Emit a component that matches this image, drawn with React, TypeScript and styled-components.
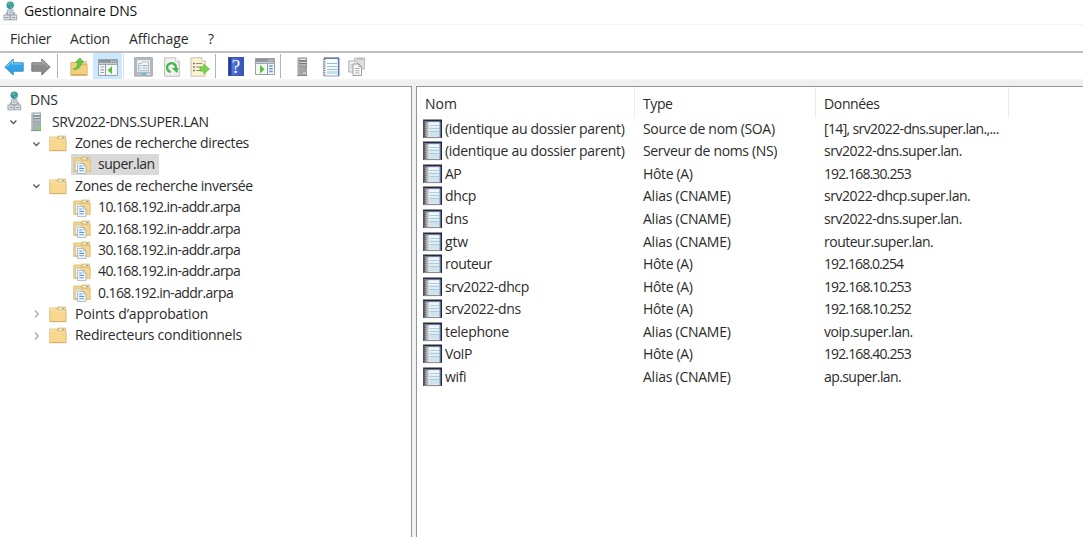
import React from 'react';
import styled, { createGlobalStyle } from 'styled-components';

const GlobalStyle = createGlobalStyle`
  * { box-sizing: border-box; }
  body { margin: 0; background: #fff; overflow: hidden; }
`;

const Window = styled.div`
  width: 1083px;
  height: 537px;
  display: flex;
  flex-direction: column;
  overflow: hidden;
  background: #fff;
  color: #2b2b2b;
  font-family: 'Open Sans', 'Noto Sans', sans-serif;
  font-size: 14px;
  line-height: 20px;
  white-space: nowrap;
`;

const Label = styled.span<{ $spacing?: number }>`
  letter-spacing: ${(p) => p.$spacing ?? -0.3}px;
`;

const TitleBar = styled.header`
  height: 25px;
  display: flex;
  align-items: center;
  gap: 6px;
  padding: 0 0 2px 3px;
  border-bottom: 1px solid #f3f3f3;
  color: #111;
`;

const MenuBar = styled.nav`
  height: 26px;
  display: flex;
  align-items: center;
  padding: 1px 0 0 10px;
`;

const MenuItem = styled.div<{ $width: number }>`
  width: ${(p) => p.$width}px;
`;

const Toolbar = styled.div`
  height: 29px;
  display: flex;
  align-items: flex-start;
  border-top: 2px solid #c0c0c0;
  border-bottom: 1px solid #f5f5f5;
`;

const Tool = styled.div<{ $before: number }>`
  flex: none;
  height: 27px;
  margin-left: ${(p) => p.$before}px;
  display: flex;
  align-items: center;
  justify-content: center;
`;

const ActiveTool = styled(Tool)`
  width: 29px;
  height: 26px;
  padding-top: 2px;
  background: #cce8ff;
`;

const Separator = styled.div<{ $before: number; $light?: boolean }>`
  flex: none;
  width: 1px;
  height: 24px;
  margin: 1px 0 0 ${(p) => p.$before}px;
  background: ${(p) => (p.$light ? '#dcdcdc' : '#b4b4b4')};
`;

const Workspace = styled.main`
  flex: 1;
  display: flex;
  gap: 4px;
  padding-top: 6px;
  background: #f0f0f0;
`;

const TreePane = styled.section`
  width: 412px;
  padding-top: 3.2px;
  background: #fff;
  border-top: 1px solid #8f969c;
  border-right: 1px solid #8f969c;
`;

const TreeRow = styled.div<{ $level: number }>`
  height: 21.36px;
  display: flex;
  align-items: center;
  padding-left: ${(p) => [0, 6, 29, 50][p.$level]}px;
`;

const Twisty = styled.div<{ $level: number }>`
  width: ${(p) => [6, 22, 18, 21][p.$level]}px;
  display: flex;
`;

const TreeIcon = styled.div<{ $level: number }>`
  width: ${(p) => [19, 19, 23, 22][p.$level]}px;
  padding-left: ${(p) => [1, 2, 2, 2][p.$level]}px;
  display: flex;
  justify-content: flex-start;
`;

const TreeText = styled.div`
  height: 21px;
  padding: 0 4px 0 5px;
`;

const SelectionBand = styled.div<{ $selected?: boolean }>`
  display: flex;
  align-items: center;
  background: ${(p) => (p.$selected ? '#d9d9d9' : 'transparent')};
`;

const ListPane = styled.section`
  flex: 1;
  background: #fff;
  border-top: 1px solid #8f969c;
  border-left: 1px solid #8f969c;
`;

const HeaderRow = styled.div`
  height: 30.5px;
  display: flex;
`;

const HeaderCell = styled.div<{ $width: number }>`
  width: ${(p) => p.$width}px;
  padding: 7px 0 0 8px;
  border-right: 1px solid #ececec;
`;

const RecordRow = styled.div`
  height: 22.57px;
  display: flex;
  align-items: center;
`;

const NameCell = styled.div`
  width: 218px;
  display: flex;
  align-items: center;
  gap: 2px;
  padding-left: 6px;
`;

const Cell = styled.div<{ $width: number }>`
  width: ${(p) => p.$width}px;
  padding-left: 8px;
`;

const NetworkIcon = () => (
  <svg width="15" height="20" viewBox="0 0 15 20">
    <path d="M7.5 8v5M3.5 14v-2h8v2" fill="none" stroke="#a9afb7" strokeWidth="1.4" />
    <circle cx="7.2" cy="4.2" r="3.7" fill="#3b90b5" />
    <path d="M4.6 2.2Q7 .4 9 1.8L7.6 4 5 4.4zM7 5.5l3.4-1.4-.8 2.7-2 .8z" fill="#4fbb74" />
    <rect x="4.6" y="9" width="5.4" height="4.4" fill="#e5e8ec" stroke="#a0a6af" />
    <rect x="1" y="14" width="6" height="4.8" fill="#dfe3e8" stroke="#a0a6af" />
    <rect x="7.6" y="14" width="6" height="4.8" fill="#dfe3e8" stroke="#a0a6af" />
    <path d="M6 11.2h2.6M2.5 16.5h3M9.2 16.5h3" stroke="#8a929d" />
  </svg>
);

const ServerIcon = ({ gray }: { gray?: boolean }) => (
  <svg width="12" height="20" viewBox="0 0 12 20">
    <path d="M1 1l2-.6h8V19H1z" fill={gray ? '#949494' : '#98a5ac'} />
    <path d="M1 1l1.6-.4V19H1z" fill="#c3c8cb" />
    <path d="M3.5 2h6.5v7H3.5z" fill={gray ? '#777' : '#7e8b92'} />
    <path d="M3.5 2.4H10M3.5 5.2H10M3.5 8H10" stroke="#eef1f2" strokeWidth="1.1" />
    <path d="M3 10h7.5v8H3z" fill={gray ? '#a4a4a4' : '#a5b1b7'} />
    <path d="M1 18.6h10" stroke={gray ? '#808080' : '#7f8b91'} strokeWidth=".8" />
    {gray ? <path d="M7 16h3" stroke="#e8e8e8" /> : <rect x="7" y="15" width="3" height="2.6" fill="#7be23a" />}
  </svg>
);

const FolderIcon = () => (
  <svg width="18" height="17" viewBox="0 0 18 17">
    <path d="M8.5 1h8v4H8z" fill="#eccb82" stroke="#d5b36b" strokeWidth=".7" />
    <path d="M10.5 2.6h5" stroke="#fff8dc" strokeWidth="1.4" />
    <path d="M13 2.6h2" stroke="#74b0d8" strokeWidth="1.2" />
    <path d="M.7 2h6.6l1.2 2.3h8.7V15.6H.7z" fill="#f7d88e" stroke="#dcb970" strokeWidth=".8" />
    <path d="M1.6 5V3h5l1.2 2.2h8.5" fill="none" stroke="#fbe8b2" />
    <path d="M.8 15.6h16.4" stroke="#c9a560" strokeWidth=".8" />
  </svg>
);

const ZoneIcon = () => (
  <svg width="18" height="18" viewBox="0 0 18 18">
    <path d="M8.5 1h8v4H8z" fill="#eccb82" stroke="#d5b36b" strokeWidth=".7" />
    <path d="M10.5 2.6h5" stroke="#fff8dc" strokeWidth="1.4" />
    <path d="M13 2.6h2" stroke="#74b0d8" strokeWidth="1.2" />
    <path d="M.7 2h6.6l1.2 2.3h8.7V15.6H.7z" fill="#f6d68c" stroke="#dcb970" strokeWidth=".8" />
    <path d="M2.3 5.2h5.6l1.6 2v7.3H2.3z" fill="#f3f3f1" stroke="#b5b5ac" strokeWidth=".7" />
    <path d="M4.6 7.4h5.8L13 10v7.4H4.6z" fill="#fbfdff" stroke="#98a7b5" strokeWidth=".8" />
    <path d="M6.2 10h3M6.2 12.4h5M6.2 14.8h5" stroke="#5c96ca" strokeWidth="1.1" />
    <path d="M10.4 7.4V10H13" fill="none" stroke="#98a7b5" strokeWidth=".7" />
  </svg>
);

const RecordIcon = () => (
  <svg width="20" height="20" viewBox="0 0 20 20">
    <path d="M.5 1h18.3v18H.5z" fill="#a3a5aa" />
    <path d="M4 2.3h13v15.5H4z" fill="#f1f6f9" />
    <path d="M3.5 2.8h2.2v15H3.5z" fill="#bfc0c3" />
    <path d="M6.5 8h9.5v9H6.5z" fill="#cfe3ed" />
    <path d="M6.5 6.5H16M6.5 9.5H16M6.5 12.5H16" stroke="#a9cde0" />
    <path d="M6.5 8H16M6.5 11H16" stroke="#eff7fa" />
    <path d="M0 1.3h19" stroke="#2a2b31" strokeWidth="1.6" />
    <path d="M3 2.6h15" stroke="#6575a5" />
    <path d="M.9 1v18" stroke="#3b3c42" strokeWidth="1.5" />
    <path d="M2.7 3v15.5" stroke="#6c6d72" strokeWidth="1.4" strokeDasharray="1 1" />
    <path d="M18.2 1v18" stroke="#1d2645" strokeWidth="1.6" />
    <path d="M16.9 3v15" stroke="#7f93bc" />
    <path d="M1 18.6h17" stroke="#8a8c90" />
  </svg>
);

const NotebookIcon = () => (
  <svg width="18" height="20" viewBox="0 0 18 20">
    <path d="M2 1h15v18H2z" fill="#f8fcfe" stroke="#98a3bd" />
    <path d="M2 1.2h15" stroke="#5d71ad" strokeWidth="1.4" />
    <path d="M16.5 1v18" stroke="#6376b2" strokeWidth="1.4" />
    <path d="M5 6.5h10M5 9.5h10M5 12.5h10" stroke="#8fc1dc" />
    <path d="M5 15.5h10" stroke="#c1deeb" strokeWidth="3" />
    <path d="M2.3 2v17" stroke="#8f9197" strokeWidth="2.6" strokeDasharray="1 1.2" />
  </svg>
);

const ArrowIcon = ({ forward }: { forward?: boolean }) => (
  <svg width="20" height="18" viewBox="0 0 20 18">
    <g transform={forward ? 'matrix(-1 0 0 1 20 0)' : undefined}>
      <path
        d="M.8 9L9.2 1v3.8h10v8.4h-10V17z"
        fill={forward ? '#8c8c8c' : '#34a3e6'}
        stroke={forward ? '#7d7d7d' : '#3c93c8'}
        strokeWidth="1"
        strokeLinejoin="round"
      />
      <path d="M2.6 8.6L8.4 3.3V6H18" fill="none" stroke={forward ? '#aaa' : '#83d0f8'} strokeWidth="1.2" />
    </g>
  </svg>
);

const UpFolderIcon = () => (
  <svg width="18" height="20" viewBox="0 0 18 20">
    <path d="M9 4h8v5H9z" fill="#dcb872" />
    <path d="M12 5.5h4.3" stroke="#fff3cb" strokeWidth="1.4" />
    <path d="M.8 5.5h6L8.3 7.6h8.9v10.8H.8z" fill="#f0cf7f" stroke="#d8b263" strokeWidth=".8" />
    <path d="M1.4 17.8h15.4" stroke="#caa04e" />
    <path d="M3 12.2c3.4-.8 4.9-3 5-6.7H5.4L9.8 .9l4 4.6h-2.6c-.2 4.6-2.8 7.4-8.2 6.7z" fill="#62c93f" stroke="#4bac33" strokeWidth=".7" />
  </svg>
);

const PanelIcon = ({ run }: { run?: boolean }) => (
  <svg width="20" height="17" viewBox="0 0 20 17">
    <path d="M.5.5h19v16H.5z" fill="#f5f6f7" stroke="#9aa0a6" />
    <path d="M1 1h18v4.8H1z" fill="#8d949c" />
    <path d="M1 4.4h18" stroke="#c8cdd2" strokeWidth="1.2" />
    <path d="M13 2.2h1.4M15.3 2.2h1.4M17.5 2.2h1" stroke="#e8edf1" />
    {run ? (
      <>
        <path d="M12.5 6v10" stroke="#8d949b" />
        <path d="M5 6.8l4.5 4.4L5 15.4z" fill="#58c03d" />
        <path d="M14.2 8h3.5M14.2 10.8h3.5M14.2 13.5h3.5" stroke="#5b99cb" strokeWidth="1.4" />
      </>
    ) : (
      <>
        <path d="M7.5 6v10" stroke="#8d949b" />
        <path d="M14 7l-4.3 4.2L14 15.2z" fill="#58c03d" />
        <path d="M2.5 8h3.3M2.5 10.8h3.3M2.5 13.5h3.3" stroke="#86a3b7" strokeWidth="1.2" />
      </>
    )}
  </svg>
);

const PropertiesIcon = () => (
  <svg width="19" height="20" viewBox="0 0 19 20">
    <path d="M.7.7h17.6v18.4H.7z" fill="#b9bdc0" stroke="#a1a6aa" />
    <path d="M2.6 2.8h13.8v12.4H2.6z" fill="#f3f5f6" stroke="#a2a7ab" strokeWidth=".7" />
    <path d="M4.5 6.4h3l1-1.4h6v8.5h-10z" fill="#f5f8fa" stroke="#9fabb4" strokeWidth=".8" />
    <path d="M5.5 8.6h2M8.5 8.6h5M5.5 11.2h2M8.5 11.2h5" stroke="#86b5d2" strokeWidth="1.1" />
    <path d="M8 17.2h4" stroke="#4bbce4" strokeWidth="1.8" />
    <path d="M13 17.2h3" stroke="#e4e8ea" strokeWidth="1.5" />
  </svg>
);

const RefreshIcon = () => (
  <svg width="16" height="20" viewBox="0 0 16 20">
    <path d="M.6.8h11l3.7 3.7v14.7H.6z" fill="#f1f1f1" stroke="#bdbdbd" />
    <path d="M11.6.8v3.7h3.7" fill="#fff" stroke="#c4c4c4" strokeWidth=".8" />
    <path d="M6.7 15C2.6 14 2 9 5 7c3.3-2.1 7.4.2 6.8 4.4" fill="none" stroke="#42b949" strokeWidth="2.3" />
    <path d="M7.7 11h6.8l-1.4 5z" fill="#42b949" />
  </svg>
);

const ExportIcon = () => (
  <svg width="20" height="20" viewBox="0 0 20 20">
    <path d="M1 .8h10.7l3.5 3.5v14.9H1z" fill="#fbf3d3" stroke="#c6c0ab" />
    <path d="M11.7.8v3.5h3.5" fill="#fff" stroke="#c6c0ab" strokeWidth=".8" />
    <path d="M3.2 6.5h1.5M3.2 10h1.5M3.2 13.5h1.5" stroke="#555" strokeWidth="1.4" />
    <path d="M6.2 6.5h6M6.2 10h4M6.2 13.5h4" stroke="#8f8b7d" strokeWidth="1.2" />
    <path d="M10 9.8h3.7V7l5.8 5-5.8 5v-2.9H10z" fill="#7ad04f" stroke="#62bb42" strokeWidth=".7" />
  </svg>
);

const HelpTile = styled.div`
  width: 16px;
  height: 19px;
  background: linear-gradient(90deg, #233c9e 0 2px, #5878d7 3px, #3154bd);
  border: 1px solid #3b56aa;
  color: #fff;
  font: 19px/17px 'Liberation Serif', serif;
  text-align: center;
`;

const CopyIcon = () => (
  <svg width="18" height="20" viewBox="0 0 18 20">
    <path d="M6.5 1h10v11h-10z" fill="#dedede" stroke="#bcbcbc" />
    <path d="M9 1h8v2H9z" fill="#c0c0c0" />
    <path d="M.8 4h6.7l2 2v9H.8z" fill="#f0f0f0" stroke="#ababab" />
    <path d="M2.5 7.5h3M2.5 9.5h3M2.5 11.5h3" stroke="#c4c4c4" />
    <path d="M5 7h6l2.5 2.5V18.5H5z" fill="#fafafa" stroke="#9d9d9d" />
    <path d="M7 11.5h4.5M7 13.8h4.5M7 16h4.5" stroke="#aaa" />
    <path d="M11 7v2.5h2.5" fill="none" stroke="#a5a5a5" />
  </svg>
);

const Chevron = ({ open }: { open?: boolean }) => (
  <svg width="14" height="10" viewBox="0 0 14 10">
    <path
      d={open ? 'M4.4 3.6l3 2.9 3-2.9' : 'M6 1.6l3.2 3.4L6 8.4'}
      fill="none"
      stroke={open ? '#5c5c5c' : '#acacac'}
      strokeWidth="1.4"
    />
  </svg>
);

type Node = {
  text: string;
  level: number;
  icon: React.ReactNode;
  open?: boolean;
  closed?: boolean;
  selected?: boolean;
  spacing?: number;
};

const nodes: Node[] = [
  { text: 'DNS', level: 0, icon: <NetworkIcon />, spacing: -0.2 },
  { text: 'SRV2022-DNS.SUPER.LAN', level: 1, icon: <ServerIcon />, open: true, spacing: -0.47 },
  { text: 'Zones de recherche directes', level: 2, icon: <FolderIcon />, open: true, spacing: -0.39 },
  { text: 'super.lan', level: 3, icon: <ZoneIcon />, selected: true, spacing: -0.48 },
  { text: 'Zones de recherche inversée', level: 2, icon: <FolderIcon />, open: true, spacing: -0.36 },
  { text: '10.168.192.in-addr.arpa', level: 3, icon: <ZoneIcon />, spacing: -0.59 },
  { text: '20.168.192.in-addr.arpa', level: 3, icon: <ZoneIcon />, spacing: -0.59 },
  { text: '30.168.192.in-addr.arpa', level: 3, icon: <ZoneIcon />, spacing: -0.59 },
  { text: '40.168.192.in-addr.arpa', level: 3, icon: <ZoneIcon />, spacing: -0.59 },
  { text: '0.168.192.in-addr.arpa', level: 3, icon: <ZoneIcon />, spacing: -0.58 },
  { text: 'Points d’approbation', level: 2, icon: <FolderIcon />, closed: true, spacing: -0.15 },
  { text: 'Redirecteurs conditionnels', level: 2, icon: <FolderIcon />, closed: true, spacing: -0.29 },
];

type Field = [text: string, spacing: number];

const alias: Field = ['Alias (CNAME)', -0.25];
const host: Field = ['Hôte (A)', -0.35];
const parent: Field = ['(identique au dossier parent)', -0.31];

const records: [Field, Field, Field][] = [
  [parent, ['Source de nom (SOA)', -0.33], ['[14], srv2022-dns.super.lan.,...', -0.64]],
  [parent, ['Serveur de noms (NS)', -0.34], ['srv2022-dns.super.lan.', -0.46]],
  [['AP', -0.5], host, ['192.168.30.253', -0.88]],
  [['dhcp', -0.35], alias, ['srv2022-dhcp.super.lan.', -0.45]],
  [['dns', -0.15], alias, ['srv2022-dns.super.lan.', -0.46]],
  [['gtw', -0.15], alias, ['routeur.super.lan.', -0.5]],
  [['routeur', -0.45], host, ['192.168.0.254', -0.92]],
  [['srv2022-dhcp', -0.37], host, ['192.168.10.253', -0.88]],
  [['srv2022-dns', -0.36], host, ['192.168.10.252', -0.88]],
  [['telephone', -0.28], alias, ['voip.super.lan.', -0.47]],
  [['VoIP', -0.6], host, ['192.168.40.253', -0.88]],
  [['wifi', -0.35], alias, ['ap.super.lan.', -0.58]],
];

export default function App() {
  return (
    <>
      <GlobalStyle />
      <Window>
        <TitleBar>
          <NetworkIcon />
          <Label $spacing={-0.17}>Gestionnaire DNS</Label>
        </TitleBar>
        <MenuBar>
          <MenuItem $width={60}><Label $spacing={-0.27}>Fichier</Label></MenuItem>
          <MenuItem $width={59}><Label $spacing={-0.2}>Action</Label></MenuItem>
          <MenuItem $width={79}><Label $spacing={-0.1}>Affichage</Label></MenuItem>
          <MenuItem $width={20}><Label>?</Label></MenuItem>
        </MenuBar>
        <Toolbar>
          <Tool $before={4}><ArrowIcon /></Tool>
          <Tool $before={7}><ArrowIcon forward /></Tool>
          <Separator $before={6} />
          <Tool $before={12}><UpFolderIcon /></Tool>
          <ActiveTool $before={5}><PanelIcon /></ActiveTool>
          <Separator $before={1} $light />
          <Tool $before={10}><PropertiesIcon /></Tool>
          <Tool $before={11}><RefreshIcon /></Tool>
          <Tool $before={10}><ExportIcon /></Tool>
          <Separator $before={5} />
          <Tool $before={12}><HelpTile>?</HelpTile></Tool>
          <Tool $before={11}><PanelIcon run /></Tool>
          <Separator $before={5} />
          <Tool $before={15}><ServerIcon gray /></Tool>
          <Tool $before={14}><NotebookIcon /></Tool>
          <Tool $before={8}><CopyIcon /></Tool>
        </Toolbar>
        <Workspace>
          <TreePane>
            {nodes.map((n) => (
              <TreeRow key={n.text} $level={n.level}>
                <Twisty $level={n.level}>{(n.open || n.closed) && <Chevron open={n.open} />}</Twisty>
                <SelectionBand $selected={n.selected}>
                  <TreeIcon $level={n.level}>{n.icon}</TreeIcon>
                  <TreeText><Label $spacing={n.spacing}>{n.text}</Label></TreeText>
                </SelectionBand>
              </TreeRow>
            ))}
          </TreePane>
          <ListPane>
            <HeaderRow>
              <HeaderCell $width={218}><Label $spacing={0}>Nom</Label></HeaderCell>
              <HeaderCell $width={181}><Label $spacing={-0.4}>Type</Label></HeaderCell>
              <HeaderCell $width={193}><Label $spacing={-0.35}>Données</Label></HeaderCell>
            </HeaderRow>
            {records.map(([name, type, data], i) => (
              <RecordRow key={i}>
                <NameCell><RecordIcon /><Label $spacing={name[1]}>{name[0]}</Label></NameCell>
                <Cell $width={181}><Label $spacing={type[1]}>{type[0]}</Label></Cell>
                <Cell $width={193}><Label $spacing={data[1]}>{data[0]}</Label></Cell>
              </RecordRow>
            ))}
          </ListPane>
        </Workspace>
      </Window>
    </>
  );
}
